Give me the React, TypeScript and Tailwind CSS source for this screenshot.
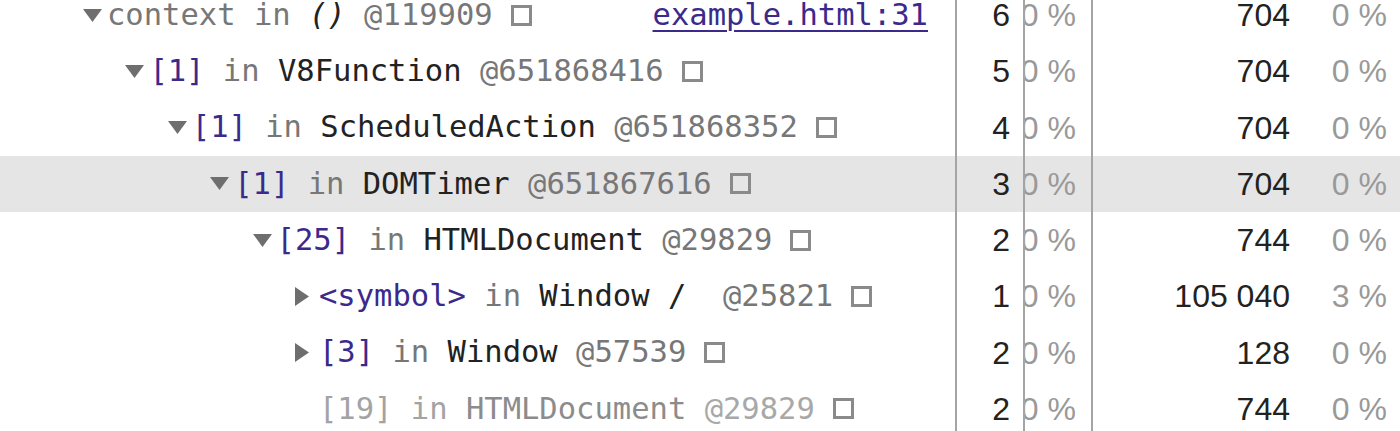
import React from "react";

type Row = {
  level: number;
  arrow: "down" | "right" | "none";
  name: string;
  nameKind: "gray" | "index";
  cls: string;
  italic?: boolean;
  id: string;
  link?: string;
  dist: string;
  shallowPct: string;
  retained: string;
  retainedPct: string;
  selected?: boolean;
  faded?: boolean;
};

const rows: Row[] = [
  { level: 0, arrow: "down", name: "context", nameKind: "gray", cls: "()", italic: true, id: "@119909", link: "example.html:31", dist: "6", shallowPct: "0 %", retained: "704", retainedPct: "0 %" },
  { level: 1, arrow: "down", name: "[1]", nameKind: "index", cls: "V8Function", id: "@651868416", dist: "5", shallowPct: "0 %", retained: "704", retainedPct: "0 %" },
  { level: 2, arrow: "down", name: "[1]", nameKind: "index", cls: "ScheduledAction", id: "@651868352", dist: "4", shallowPct: "0 %", retained: "704", retainedPct: "0 %" },
  { level: 3, arrow: "down", name: "[1]", nameKind: "index", cls: "DOMTimer", id: "@651867616", dist: "3", shallowPct: "0 %", retained: "704", retainedPct: "0 %", selected: true },
  { level: 4, arrow: "down", name: "[25]", nameKind: "index", cls: "HTMLDocument", id: "@29829", dist: "2", shallowPct: "0 %", retained: "744", retainedPct: "0 %" },
  { level: 5, arrow: "right", name: "<symbol>", nameKind: "index", cls: "Window / ", id: "@25821", dist: "1", shallowPct: "0 %", retained: "105 040", retainedPct: "3 %" },
  { level: 5, arrow: "right", name: "[3]", nameKind: "index", cls: "Window", id: "@57539", dist: "2", shallowPct: "0 %", retained: "128", retainedPct: "0 %" },
  { level: 5, arrow: "none", name: "[19]", nameKind: "index", cls: "HTMLDocument", id: "@29829", dist: "2", shallowPct: "0 %", retained: "744", retainedPct: "0 %", faded: true },
];

const Arrow = ({ dir }: { dir: Row["arrow"] }) => {
  if (dir === "down")
    return (
      <svg width="19" height="13" viewBox="0 0 19 13">
        <polygon points="0,0 19,0 9.5,13" fill="#6e6e6e" />
      </svg>
    );
  if (dir === "right")
    return (
      <svg width="14" height="19" viewBox="0 0 14 19">
        <polygon points="0,0 14,9.5 0,19" fill="#6e6e6e" />
      </svg>
    );
  return null;
};

const App = () => {
  return (
    <div className="h-[431px] w-[1400px] overflow-hidden bg-white">
      <div className="-mt-[13px] flex flex-col">
        {rows.map((r, i) => (
          <div
            key={i}
            className={`flex h-[56.25px] items-stretch ${r.selected ? "bg-[#e5e5e5]" : ""}`}
          >
            {/* object */}
            <div className="flex w-[957px] shrink-0 items-center overflow-hidden border-r-2 border-[#a4a4a4] pr-[27px] font-['DejaVu_Sans_Mono',monospace] text-[30.5px] leading-none whitespace-pre">
              <div style={{ width: 83 + 42.4 * r.level }} className="shrink-0" />
              <div className="flex w-[24px] shrink-0 items-center">
                <Arrow dir={r.arrow} />
              </div>
              <span
                className={
                  r.faded
                    ? "text-[#a3a3a3]"
                    : r.nameKind === "index"
                    ? "text-[#3b2a8c]"
                    : "text-[#777777]"
                }
              >
                {r.name}
              </span>
              <span className={r.faded ? "text-[#a3a3a3]" : "text-[#777777]"}> in </span>
              <span className={`${r.faded ? "text-[#8c8c8c]" : "text-[#222222]"} ${r.italic ? "italic" : ""}`}>
                {r.cls}
              </span>
              <span className={r.faded ? "text-[#a8a8a8]" : "text-[#777777]"}> {r.id}</span>
              <span className="ml-[18px] inline-block h-[21px] w-[21px] shrink-0 border-[3px] border-[#8a8a8a]" />
              {r.link && (
                <span className="ml-auto text-[#3b2a8c] underline decoration-2 underline-offset-[5px]">
                  {r.link}
                </span>
              )}
            </div>
            {/* distance */}
            <div className="flex w-[68px] shrink-0 items-center justify-end border-r-2 border-[#a4a4a4] pr-[13px] font-['Liberation_Sans',Arial,sans-serif] text-[32px] leading-none text-[#222222]">
              {r.dist}
            </div>
            {/* shallow size */}
            <div className="flex w-[68px] shrink-0 items-center justify-end overflow-hidden border-r-2 border-[#a4a4a4] pr-[15px] font-['Liberation_Sans',Arial,sans-serif] text-[32px] leading-none whitespace-pre text-[#999999]">
              <span className="shrink-0">{r.shallowPct}</span>
            </div>
            {/* retained size */}
            <div className="flex flex-1 items-center justify-end pr-[13px] font-['Liberation_Sans',Arial,sans-serif] text-[32px] leading-none whitespace-pre">
              <span className="text-[#222222]">{r.retained}</span>
              <span className="w-[97px] text-right text-[#999999]">{r.retainedPct}</span>
            </div>
          </div>
        ))}
      </div>
    </div>
  );
};

export default App;
